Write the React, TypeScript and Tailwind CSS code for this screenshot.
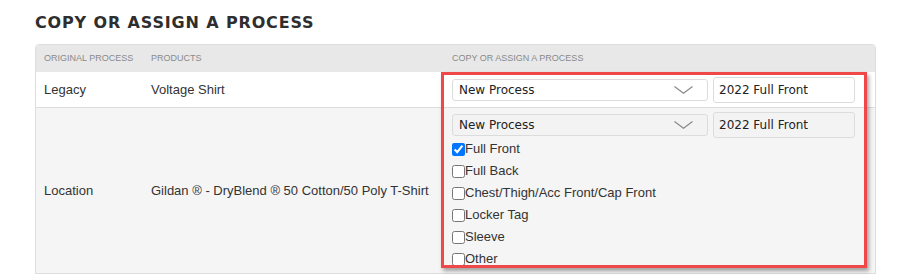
import React from 'react'

const locations = [
  { label: 'Full Front', checked: true },
  { label: 'Full Back', checked: false },
  { label: 'Chest/Thigh/Acc Front/Cap Front', checked: false },
  { label: 'Locker Tag', checked: false },
  { label: 'Sleeve', checked: false },
  { label: 'Other', checked: false },
]

function Chevron() {
  return (
    <svg width="19" height="8" viewBox="0 0 19 8" fill="none" stroke="#8a8a8a" strokeWidth={1.2}>
      <path d="M0.5 0.5L9.5 7.3L18.5 0.5" />
    </svg>
  )
}

function ProcessSelect({ muted }: { muted?: boolean }) {
  return (
    <div
      className={`flex h-[22px] w-[256px] items-center justify-between rounded-[3px] border border-[#dcdcdc] pl-[6px] pr-[14px] ${
        muted ? 'bg-[#f3f3f3]' : 'bg-white'
      }`}
    >
      <span>New Process</span>
      <Chevron />
    </div>
  )
}

function NameInput({ muted }: { muted?: boolean }) {
  return (
    <div
      className={`flex h-[26px] w-[142px] items-center rounded-[3px] border border-[#dcdcdc] pl-[5px] ${
        muted ? 'bg-[#f3f3f3]' : 'bg-white'
      }`}
    >
      2022 Full Front
    </div>
  )
}

export default function App() {
  return (
    <div className="relative h-[275px] w-[910px] overflow-hidden bg-white font-['Liberation_Sans',Arial,sans-serif] text-[13px] text-[#333]">
      <div className="ml-[35px] w-[841px] pt-[13px]">
        <h1 className="h-[31px] font-['DejaVu_Sans',Verdana,sans-serif] text-[16px] font-bold leading-[19px] tracking-[0.85px] text-[#2e2e2e]">
          COPY OR ASSIGN A PROCESS
        </h1>

        <div className="overflow-hidden rounded-t-[4px] border border-[#dddddd]">
          {/* Header */}
          <div className="grid h-[27px] grid-cols-[106px_301px_1fr] items-center bg-[#e8e8e8] text-[9px] uppercase text-[#8a8a8a]">
            <div className="pl-[8px]">Original Process</div>
            <div className="pl-[9px]">Products</div>
            <div className="pl-[9px]">Copy or Assign a Process</div>
          </div>

          {/* Legacy row */}
          <div className="grid grid-cols-[106px_301px_1fr] items-center border-b border-[#dddddd] bg-white">
            <div className="pl-[8px] pt-[1px]">Legacy</div>
            <div className="pl-[9px] pt-[1px]">Voltage Shirt</div>
            <div className="flex items-center gap-[5px] pb-[4px] pl-[9px] pt-[5px] font-['DejaVu_Sans',Verdana,sans-serif] text-[12px] text-[#222]">
              <ProcessSelect />
              <NameInput />
            </div>
          </div>

          {/* Location row */}
          <div className="grid grid-cols-[106px_301px_1fr] items-center bg-[#f5f5f5]">
            <div className="pl-[8px] pt-[1px]">Location</div>
            <div className="pl-[9px] pt-[1px]">Gildan ® - DryBlend ® 50 Cotton/50 Poly T-Shirt</div>
            <div className="pb-[3px] pl-[9px] pt-[4px]">
              <div className="flex items-center gap-[5px] font-['DejaVu_Sans',Verdana,sans-serif] text-[12px] text-[#222]">
                <ProcessSelect muted />
                <NameInput muted />
              </div>
              <div className="flex flex-col">
                {locations.map((loc) => (
                  <label key={loc.label} className="flex h-[22px] items-center text-[#333]">
                    <input
                      type="checkbox"
                      defaultChecked={loc.checked}
                      className="m-0 h-[13px] w-[13px]"
                    />
                    {loc.label}
                  </label>
                ))}
              </div>
            </div>
          </div>
        </div>
      </div>

      {/* Highlight annotation */}
      <div className="pointer-events-none absolute left-[441px] top-[72px] h-[196px] w-[426px] border-[3px] border-[#f04848] shadow-[2px_3px_4px_rgba(0,0,0,0.35)]" />
    </div>
  )
}
